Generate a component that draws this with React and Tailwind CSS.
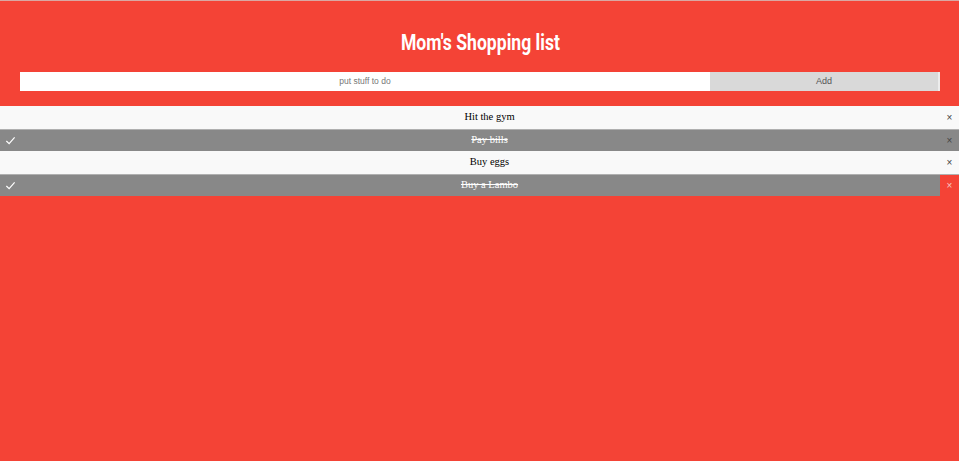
import { useState } from 'react';

const initialItems = [
  { id: 1, text: 'Hit the gym', done: false },
  { id: 2, text: 'Pay bills', done: true },
  { id: 3, text: 'Buy eggs', done: false },
  { id: 4, text: 'Buy a Lambo', done: true, hover: true },
];

function Check() {
  return (
    <svg className="w-[11px] h-[11px]" viewBox="0 0 12 12" fill="none" stroke="white" strokeWidth={1.3}>
      <path d="M1.5 6.5l3 3 6-7" />
    </svg>
  );
}

export default function App() {
  const [items] = useState(initialItems);

  return (
    <div className="min-h-[461px] bg-[#f44336] border-t border-[#d9a8a3]">
      {/* Header */}
      <div className="pl-5 pr-[19px] pb-[15px]">
        <h1 className="pt-[27px] h-[71px] text-center text-white font-bold text-[22px] leading-[30px] font-['Roboto',sans-serif]">
          <span className="inline-block scale-x-[0.8]">Mom's Shopping list</span>
        </h1>
        <div className="flex h-[19px]">
          <input
            className="flex-1 bg-white text-center text-[8.5px] text-[#666] outline-none placeholder:text-[#777] font-['Liberation_Sans',sans-serif]"
            placeholder="put stuff to do"
          />
          <button className="w-[230px] bg-[#d9d9d9] border-r-2 border-[#ececec] text-[9px] text-[#555] font-['Liberation_Sans',sans-serif]">
            Add
          </button>
        </div>
      </div>

      {/* List */}
      <ul className="font-['Liberation_Serif',serif] text-[10.5px]">
        {items.map((item) => (
          <li
            key={item.id}
            className={
              item.done
                ? 'relative flex items-center h-[22.5px] pl-5 bg-[#888] border-t border-[#b0b0b0] text-white'
                : 'relative flex items-center h-[22.5px] pl-5 bg-[#f9f9f9] text-black'
            }
          >
            {item.done && (
              <span className="absolute left-[5px] top-0 bottom-0 flex items-center">
                <Check />
              </span>
            )}
            <span className={item.done ? 'flex-1 text-center line-through' : 'flex-1 text-center'}>{item.text}</span>
            <span
              className={
                item.hover
                  ? 'absolute right-0 top-0 bottom-0 w-[19px] flex items-center justify-center bg-[#f44336] text-[#f8c6c1] text-[10px] font-["Liberation_Sans",sans-serif]'
                  : 'absolute right-0 top-0 bottom-0 w-[19px] flex items-center justify-center text-[10px] text-[#444] font-["Liberation_Sans",sans-serif]'
              }
            >
              ×
            </span>
          </li>
        ))}
      </ul>
    </div>
  );
}
